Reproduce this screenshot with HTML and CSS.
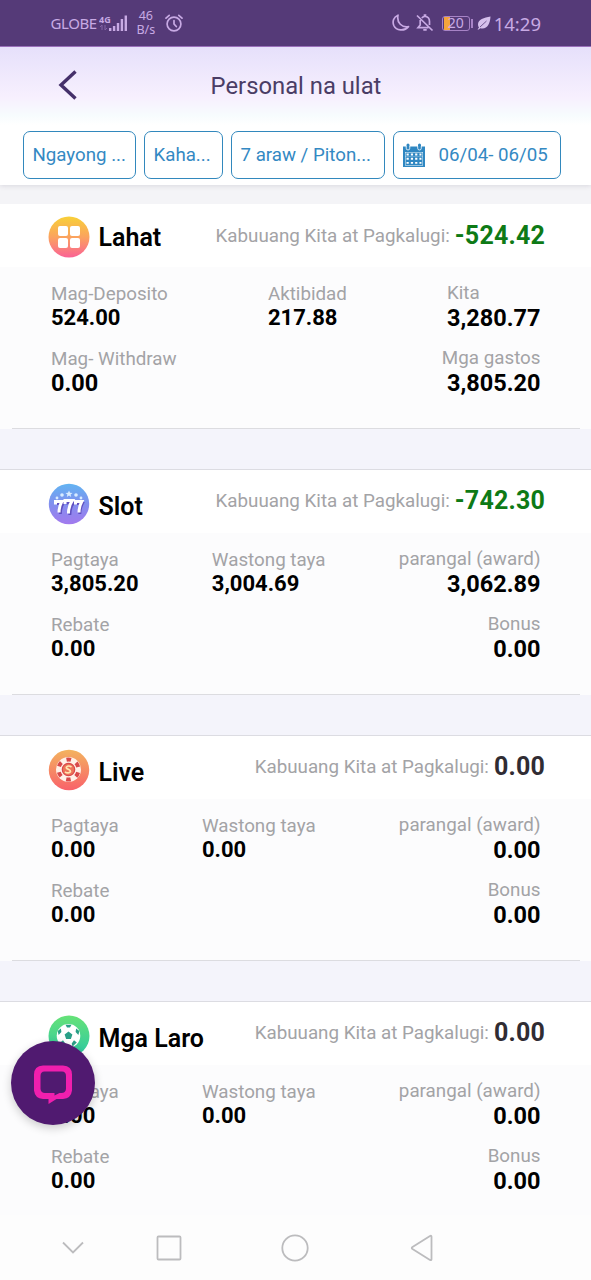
FILE: index.html
```html
<!DOCTYPE html>
<html lang="fil">
<head>
<meta charset="utf-8">
<title>Personal na ulat</title>
<link rel="stylesheet" href="styles.css">
</head>
<body>
<div class="phone">
  <div class="status">
    <span class="carrier">GLOBE</span>
    <svg class="signal" width="30" height="20" viewBox="0 0 30 20">
      <text x="0" y="9.5" class="net">4G</text>
      <path d="M3 12v5M1 14l2-2M6 12v5M8 15l-2 2" stroke="#8564a8" stroke-width="1" fill="none"/>
      <path d="M10 15h2.400v3H10zM13.900 13h2.400v5h-2.400zM17.800 10h2.400v8h-2.400zM21.700 6h2.400v12h-2.400zM25.600 2.500h2.400V18h-2.400z" fill="#c8aae4"/>
    </svg>
    <span class="speed"><span>46</span><span>B/s</span></span>
    <svg class="alarm" width="18" height="20" viewBox="0 0 18 20" fill="none" stroke="#c8aae4" stroke-width="1.700" stroke-linecap="round">
      <circle cx="9" cy="11" r="6.900"/><path d="M9 7.500V11l2.300 2.500M1 5.200l3.200-2.900M17 5.200l-3.200-2.900"/>
    </svg>
    <span class="grow"></span>
    <svg class="moon" width="18" height="18" viewBox="0 0 18 18" fill="none" stroke="#c8aae4" stroke-width="1.700" stroke-linejoin="round"><path d="M6 1.200C1.500 3 .2 7.500 1.800 11.500c2.300 5.200 10.600 6.200 14.700 1.100C10 13.800 4.500 9 6 1.200z"/></svg>
    <svg class="bell" width="18" height="18" viewBox="0 0 18 18" fill="none" stroke="#c8aae4" stroke-width="1.700"><path d="M5.800 4C7 2.700 8 2.600 8.500 2.500V1h1v1.500c3 .4 4 2.600 4 5V11M4.200 6v5L2 13.700h10.500M7.300 15.800h3.400M1 1.500l15.500 15"/></svg>
    <div class="battery"><i></i><span>20</span></div>
    <svg class="leaf" width="14" height="14" viewBox="0 0 14 14"><path d="M13.500.5C7 2 1 3 1 8.500c0 1.300.4 2.200 1 3L.5 13.500h1.300l1.400-1.300C10 14 13 8 13.500.5z" fill="#d6c0ec"/><path d="M3 11L9.500 5" stroke="#553a78" stroke-width=".8"/></svg>
    <span class="clock">14:29</span>
  </div>

  <div class="titlebar">
    <svg class="back" width="20" height="32" viewBox="0 0 20 32" fill="none" stroke="#45306a" stroke-width="3.400"><path d="M17.500 2.500L3 16l14.500 13.500"/></svg>
    <h1>Personal na ulat</h1>
  </div>

  <div class="filters">
    <div class="filter f1">Ngayong ...</div>
    <div class="filter f2">Kaha...</div>
    <div class="filter f3">7 araw / Piton...</div>
    <div class="filter f4">
      <svg width="22" height="24" viewBox="0 0 22 24"><path d="M0 3.500h3.500V2a1.500 1.500 0 013 0v1.500h8.500V2a1.500 1.500 0 013 0v1.500H22V24H0z" fill="#2f87c2"/><path d="M3.200 3v2.200a1.800 1.800 0 003.600 0V3M14.700 3v2.200a1.800 1.800 0 003.600 0V3" fill="none" stroke="#fff" stroke-width=".8"/><path d="M2 9h18v13.500H2z" fill="#fff"/><path d="M3 10h3.300v3H3zm4.300 0h3.300v3H7.300zm4.300 0h3.300v3h-3.300zm4.300 0h3.100v3h-3.100zM3 14.200h3.300v3H3zm4.300 0h3.300v3H7.300zm4.300 0h3.300v3h-3.300zm4.300 0h3.100v3h-3.100zM3 18.400h3.300v3H3zm4.300 0h3.300v3H7.300zm4.300 0h3.300v3h-3.300zm4.300 0h3.100v3h-3.100z" fill="#fff" stroke="#2f87c2" stroke-width="1.100"/></svg>
      <span>06/04- 06/05</span>
    </div>
  </div>

  <section class="card first">
    <header>
      <svg class="badge" width="42" height="42" viewBox="0 0 42 42"><defs><linearGradient id="ga" x2="0" y2="1"><stop offset="0" stop-color="#f8d038"/><stop offset=".5" stop-color="#fba35e"/><stop offset="1" stop-color="#fa6295"/></linearGradient></defs><circle cx="21" cy="21" r="20.500" fill="url(#ga)"/><g fill="#fff"><rect x="10" y="10" width="10" height="10" rx="2"/><rect x="22" y="10" width="10" height="10" rx="2"/><rect x="10" y="22" width="10" height="10" rx="2"/><rect x="22" y="22" width="10" height="10" rx="2"/></g></svg>
      <h2>Lahat</h2>
      <div class="total"><span class="label">Kabuuang Kita at Pagkalugi:</span><b class="neg">-524.42</b></div>
    </header>
    <div class="row">
      <div class="cell"><span class="label">Mag-Deposito</span><b>524.00</b></div>
      <div class="cell"><span class="label">Aktibidad</span><b>217.88</b></div>
      <div class="cell end start"><span class="label">Kita</span><b>3,280.77</b></div>
    </div>
    <div class="row">
      <div class="cell wide"><span class="label">Mag- Withdraw</span><b>0.00</b></div>
      <div class="cell end"><span class="label">Mga gastos</span><b>3,805.20</b></div>
    </div>
  </section>

  <section class="card">
    <header>
      <svg class="badge" width="42" height="42" viewBox="0 0 42 42"><defs><linearGradient id="gb" x2="0" y2="1"><stop offset="0" stop-color="#62b4f2"/><stop offset=".5" stop-color="#828fee"/><stop offset="1" stop-color="#a27aee"/></linearGradient></defs><circle cx="21" cy="21" r="20.200" fill="url(#gb)"/>
        <g fill="none" stroke="#5f4fc0" stroke-width="3" transform="translate(.8 1)"><path d="M8 19.500h6q-2.500 5-2.500 10.500M17.500 19h7q-3.500 5-3.500 12M27.500 19.500h6q-2.500 5-2.500 10.500"/></g>
        <g fill="none" stroke="#fff" stroke-width="3"><path d="M7.500 21.500v-3h6.300q-2.800 5-2.800 11M17 21v-3.500h7.300q-3.800 5-3.800 13M27.500 21.500v-3h6.300q-2.800 5-2.800 11"/></g>
        <g fill="#d9ecff"><path d="M21 7.500l1 2.200 2.500.2-1.900 1.600.6 2.400-2.200-1.300-2.200 1.300.6-2.400-1.900-1.600 2.500-.2z"/><circle cx="14" cy="12" r="1.800"/><circle cx="28" cy="12" r="1.800"/><circle cx="9" cy="15" r="1.400"/><circle cx="33" cy="15" r="1.400"/></g></svg>
      <h2>Slot</h2>
      <div class="total"><span class="label">Kabuuang Kita at Pagkalugi:</span><b class="neg">-742.30</b></div>
    </header>
    <div class="row">
      <div class="cell"><span class="label">Pagtaya</span><b>3,805.20</b></div>
      <div class="cell"><span class="label">Wastong taya</span><b>3,004.69</b></div>
      <div class="cell end"><span class="label">parangal (award)</span><b>3,062.89</b></div>
    </div>
    <div class="row">
      <div class="cell"><span class="label">Rebate</span><b>0.00</b></div>
      <div class="cell end"><span class="label">Bonus</span><b>0.00</b></div>
    </div>
  </section>

  <section class="card">
    <header>
      <svg class="badge" width="42" height="42" viewBox="0 0 42 42"><defs><linearGradient id="gc" x2="0" y2="1"><stop offset="0" stop-color="#f3b35f"/><stop offset="1" stop-color="#f9626a"/></linearGradient></defs><circle cx="21" cy="21" r="20.200" fill="url(#gc)"/><circle cx="20.500" cy="20.500" r="12.500" fill="#fff0e7"/><circle cx="20.500" cy="20.500" r="10" fill="none" stroke="#d9494a" stroke-width="4" stroke-dasharray="4.600 5.870" stroke-dashoffset="-2.900"/><circle cx="20.500" cy="20.500" r="6.200" fill="#ed7458" stroke="#d9494a" stroke-width="1.200"/><path d="M23.500 18q-3-2-5 0c-1.500 2 4.500 2.500 4 4.500-1 2-4 1.500-5.500.3" fill="none" stroke="#ffe6b0" stroke-width="1.700"/></svg>
      <h2>Live</h2>
      <div class="total"><span class="label">Kabuuang Kita at Pagkalugi:</span><b>0.00</b></div>
    </header>
    <div class="row">
      <div class="cell"><span class="label">Pagtaya</span><b>0.00</b></div>
      <div class="cell"><span class="label">Wastong taya</span><b>0.00</b></div>
      <div class="cell end"><span class="label">parangal (award)</span><b>0.00</b></div>
    </div>
    <div class="row">
      <div class="cell"><span class="label">Rebate</span><b>0.00</b></div>
      <div class="cell end"><span class="label">Bonus</span><b>0.00</b></div>
    </div>
  </section>

  <section class="card last">
    <header>
      <svg class="badge" width="42" height="42" viewBox="0 0 42 42"><defs><linearGradient id="gd" x2="0" y2="1"><stop offset="0" stop-color="#66e277"/><stop offset="1" stop-color="#2cc8a4"/></linearGradient></defs><circle cx="21" cy="21" r="20.500" fill="url(#gd)"/><circle cx="20.500" cy="20.800" r="11.800" fill="#fff"/><g fill="#299f87"><path d="M20.500 16.500l3.900 2.900-1.500 4.600h-4.800l-1.500-4.600zM17.500 9.700h6l-1.500 2.800h-3zM9.700 16l3.200-2.500.5 3.600-2.800 2.900zM31.300 16l-3.200-2.500-.5 3.600 2.800 2.900zM12.200 27.500l2.800-2.300 2.300 3.300-.8 3zM28.800 27.500L26 25.200l-2.300 3.300.8 3z"/></g></svg>
      <h2>Mga Laro</h2>
      <div class="total"><span class="label">Kabuuang Kita at Pagkalugi:</span><b>0.00</b></div>
    </header>
    <div class="row">
      <div class="cell"><span class="label">Pagtaya</span><b>0.00</b></div>
      <div class="cell"><span class="label">Wastong taya</span><b>0.00</b></div>
      <div class="cell end"><span class="label">parangal (award)</span><b>0.00</b></div>
    </div>
    <div class="row">
      <div class="cell"><span class="label">Rebate</span><b>0.00</b></div>
      <div class="cell end"><span class="label">Bonus</span><b>0.00</b></div>
    </div>
  </section>

  <nav class="navbar">
    <svg width="24" height="28" viewBox="0 0 24 28"><path d="M2 8.500l10 10 10-10"/></svg>
    <svg width="28" height="28" viewBox="0 0 28 28"><rect x="2.500" y="2.500" width="23" height="23" rx="1"/></svg>
    <svg width="28" height="28" viewBox="0 0 28 28"><circle cx="14" cy="14" r="12.700"/></svg>
    <svg width="26" height="28" viewBox="0 0 26 28"><path d="M22.500 2.800v22.400q0 1.500-1.500.7L3.500 15q-1.500-1 0-2L21 2q1.500-.8 1.500.8z"/></svg>
  </nav>

  <div class="chat"><svg width="42" height="42" viewBox="0 0 42 42" fill="#f01fae" fill-rule="evenodd"><path d="M11 3.500h20q9 .5 9 9v16q-1 8-9 8.500h-6.500L16.500 42v-5H11q-8-.5-9-8.500v-16q0-8.500 9-9zM12.500 9.500q-4 0-4 4.500v13q.5 4 4.500 4h9.500v2.500l5-2.500h2q4 0 4.500-4V14q0-4.500-4-4.500z"/></svg></div>
</div>
</body>
</html>
```
FILE: styles.css
```css
* { box-sizing: border-box; }
body { margin: 0; font-family: Roboto, "Liberation Sans", sans-serif; background: #fdfdfd; }
h1, h2 { margin: 0; }
svg { display: block; flex: none; }
.phone { position: relative; width: 591px; height: 1280px; overflow: hidden; display: flex; flex-direction: column; }

.status { height: 47px; flex: none; background: #553a78; border-bottom: 1px solid #9a6fbb; display: flex; align-items: center; padding: 0 50px 0 50.500px; color: #c8aae4; font-family: "Noto Sans", sans-serif; }
.carrier { font-size: 15px; letter-spacing: -.4px; }
.signal { margin-left: 2px; }
.net { font: bold 9px "Open Sans", sans-serif; fill: #c8aae4; }
.speed { display: flex; flex-direction: column; align-items: center; width: 20px; margin-left: 7px; font-size: 12.500px; line-height: 14.500px; }
.alarm { margin-left: 9px; }
.grow { flex: 1; }
.bell { margin-left: 6px; }
.battery { position: relative; margin-left: 8px; margin-right: 3px; width: 28px; height: 15px; border: 1px solid #a783c6; border-radius: 3px; display: flex; align-items: center; justify-content: center; font-size: 14px; line-height: 20px; }
.battery i { position: absolute; left: 1px; top: 0; width: 6px; height: 13px; background: #f3a43b; }
.battery span { position: relative; }
.battery::after { content: ""; position: absolute; right: -4px; top: 2px; width: 2px; height: 9px; background: #a783c6; }
.leaf { margin-left: 4px; }
.clock { margin-left: 3px; font-size: 18.500px; }

.titlebar { height: 78px; flex: none; position: relative; display: flex; align-items: center; justify-content: center; background: linear-gradient(#e6e0fb, #f7f0fe 65%, #f7fcfe 88%, #fff); }
.back { position: absolute; left: 58px; top: 22px; }
.titlebar h1 { font-weight: 400; font-size: 23.800px; color: #4a3d65; padding-left: 1px; }

.filters { height: 60px; flex: none; background: #fff; display: flex; gap: 8px; padding: 6px 0 6px 23px; box-shadow: 0 1px 5px rgba(60, 50, 80, .14); clip-path: inset(0 0 -10px 0); z-index: 1; }
.filter { height: 47.500px; border: 1px solid #3288bd; border-radius: 7px; color: #3489c3; font-size: 18.700px; line-height: 46px; padding-left: 8.500px; white-space: nowrap; }
.f1 { width: 113px; }
.f2 { width: 79px; }
.f3 { width: 154px; }
.f4 { width: 168px; display: flex; align-items: center; gap: 14px; }

.card { flex: none; height: 266px; position: relative; border-top: 1px solid #dcdce2; border-bottom: 40px solid #f4f4fb; background: #fcfcfd; }
.card::after { content: ""; position: absolute; left: 12px; right: 11px; bottom: 0; height: 1px; background: #dcdce0; }
.first { height: 284px; border-top: 19px solid #f4f4f7; }
.last { height: 214px; border-bottom: 0; }
.last::after { display: none; }
.card header { height: 63px; background: #fff; display: flex; align-items: center; padding: 0 46px 0 48px; }
.badge { margin-top: 4px; }
.first .badge { margin-top: 2px; }
.card h2 { font-size: 25px; line-height: 30px; font-weight: 600; color: #000; margin: 10px 0 0 8.500px; }
.first h2 { margin-top: 4px; }
.total { margin: -2px 0 0 auto; display: flex; align-items: center; gap: 5px; }
.first .total { margin-top: 0; }
.total b { font-size: 25px; line-height: 30px; color: #302c33; letter-spacing: .2px; }
.total .neg { color: #0e7a16; }
.label { font-size: 18.800px; line-height: 22px; color: #a3a3a6; white-space: nowrap; }
.row { display: flex; justify-content: space-between; padding: 16px 50.500px 0 51px; height: 65px; }
.cell { display: flex; flex-direction: column; }
.cell b { font-size: 22px; line-height: 26px; color: #000; }
.end { align-items: flex-end; }
.start { align-items: flex-start; }
.end .label { margin-top: -1px; margin-bottom: 1px; }
.end b, .wide b { font-size: 23.500px; }

.navbar { flex: 1; display: flex; align-items: flex-start; padding: 18.500px 0 0 61px; }
.navbar svg { fill: none; stroke: #bcbcbe; stroke-width: 1.800; }
.navbar svg:nth-child(2) { margin-left: 70px; }
.navbar svg:nth-child(3) { margin-left: 98px; }
.navbar svg:nth-child(4) { margin-left: 100px; }

.chat { position: absolute; left: 11px; top: 1041px; width: 84px; height: 84px; border-radius: 50%; background: #501a70; display: flex; align-items: center; justify-content: center; box-shadow: 0 3px 10px rgba(0, 0, 0, .2); }
```
